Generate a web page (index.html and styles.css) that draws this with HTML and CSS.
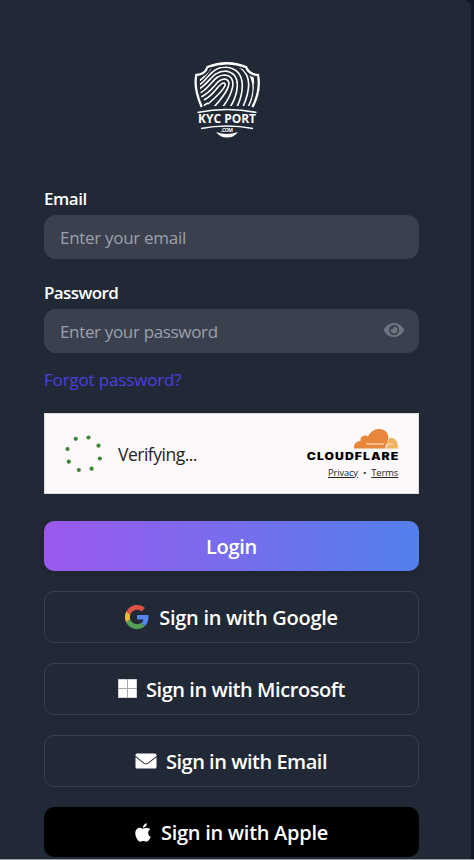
FILE: index.html
```html
<!DOCTYPE html>
<html lang="en">
<head>
<meta charset="utf-8">
<title>KYC Port – Login</title>
<link rel="stylesheet" href="styles.css">
</head>
<body>
<main class="card">
  <svg class="logo" viewBox="0 0 84 94" width="84" height="94" role="img" aria-label="KYC Port">
    <defs><clipPath id="shield"><path d="M15 25Q22 24 25.500 17Q42 11.500 58 17Q62 24 69 25Q70 41 65 54H19Q14 41 15 25Z"/></clipPath></defs>
    <g fill="none" stroke="#fff">
      <path stroke-width="2.300" d="M16.700 55Q8.500 36 11.300 23Q20 22.500 22.500 15Q42 7.500 61 15Q64 22.500 73 23Q76 38 67.500 55"/>
      <g stroke-width="1.600" clip-path="url(#shield)">
        <path d="M19 48C32 41 33 31 39 31C43 32 37 40 23 52"/>
        <path d="M16 45C30 38 31 27 40 27C49 29 41 42 29 55"/>
        <path d="M15 41C27 35 28 23 40 23C54 25 47 43 37 56"/>
        <path d="M14 37C25 31 27 19 41 19C59 22 52 45 44 57"/>
        <path d="M14 33C23 28 26 15 41 15C65 18 57 45 51 57"/>
        <path d="M14 29C21 25 24 18 28 13M50 13C70 21 64 42 57 57"/>
        <path d="M60 16C71 28 70 43 62 57M66 22C72 33 71 45 66 56"/>
        <path d="M18 54L23 51"/>
      </g>
      <path stroke-width="1.600" d="M12.500 60.500Q42 54.500 71.500 60.500M16 76.500Q42 71.500 68 76.500"/>
    </g>
    <text class="logo-name" x="42" y="71" textLength="58" lengthAdjust="spacingAndGlyphs">KYC PORT</text>
    <text class="logo-com" x="42" y="79.500" textLength="12">.COM</text>
    <path d="M31 80Q42 84 53 80Q49 85.500 42 85.500Q35 85.500 31 80Z" fill="#fff"/>
  </svg>

  <form class="form">
    <label class="label label-email" for="email">Email</label>
    <div class="field"><input id="email" class="input input-email" type="email" placeholder="Enter your email"></div>
    <label class="label label-password" for="password">Password</label>
    <div class="field">
      <input id="password" class="input input-password" type="password" placeholder="Enter your password">
      <svg class="eye" viewBox="0 0 22 16" width="22" height="16"><path fill="#717582" fill-rule="evenodd" d="M11 1C5.500 1 2.200 5 .7 8C2.200 11 5.500 15 11 15S19.800 11 21.300 8C19.800 5 16.500 1 11 1ZM11 2.800A5.200 5.200 0 1 1 11 13.200A5.200 5.200 0 0 1 11 2.800ZM11 4.500A3.500 3.500 0 1 1 7.600 7.300Q10.500 8 11 4.500Z"/></svg>
    </div>
    <a class="forgot">Forgot password?</a>

    <div class="turnstile">
      <svg class="spinner" viewBox="0 0 40 40" width="40" height="40" fill="#3f8238">
        <circle cx="13.700" cy="4.800" r="2.100"/><circle cx="26.500" cy="3.500" r="2.100"/><circle cx="36.500" cy="11.700" r="2.100"/><circle cx="37.800" cy="24.500" r="2.100"/><circle cx="29.600" cy="34.700" r="2.100"/><circle cx="16.800" cy="36" r="2.100"/><circle cx="6.800" cy="27.700" r="2.100"/><circle cx="5.500" cy="15" r="2.100"/>
      </svg>
      <span class="verifying">Verifying...</span>
      <div class="provider">
        <svg class="cf" viewBox="0 0 94 34" width="94" height="34">
          <path fill="#e8873b" d="M48 20.500C47.500 16 50.500 13 54.500 13C54 8.500 58.500 6 62 8.500C64.500 3 69.500 .5 74.500 1C80.500 2 83.500 7 82 12L79 20.500Z"/>
          <path fill="#efb35c" d="M79.500 20.500L82 17L80.500 15.500L83.500 10C88.500 9 92.500 13.500 91.800 20.500Z"/>
          <path d="M60 15.200H79L77.500 16.800H60ZM82 15L89 16L82 18Z" fill="#f7c9a0"/>
          <text class="cf-name" transform="translate(.8 31.500) scale(1.220 1)" x="0" y="0" textLength="75" lengthAdjust="spacing">CLOUDFLARE</text>
        </svg>
        <div class="legal"><u class="privacy">Privacy</u><span>•</span><u>Terms</u></div>
      </div>
    </div>

    <button class="btn btn-login" type="button"><span class="t-login">Login</span></button>
    <button class="btn btn-outline" type="button">
      <svg class="i-google" viewBox="0 0 48 48" width="24" height="24"><path fill="#dc5346" d="M24 9.500c3.500 0 6.700 1.200 9.200 3.600l6.900-6.900C35.900 2.400 30.500 0 24 0 14.600 0 6.500 5.400 2.600 13.200l8 6.200C12.400 13.700 17.700 9.500 24 9.500z"/><path fill="#5485ec" d="M47 24.600c0-1.600-.2-3.100-.4-4.600H24v9h12.900c-.6 3-2.200 5.500-4.700 7.200l7.700 6C44.400 38 47 31.800 47 24.600z"/><path fill="#e9b83c" d="M10.500 28.600a14.500 14.500 0 0 1 0-9.200l-8-6.200a24 24 0 0 0 0 21.600z"/><path fill="#559e55" d="M24 48c6.500 0 11.900-2.100 15.900-5.800l-7.700-6c-2.200 1.500-4.900 2.300-8.200 2.300-6.300 0-11.600-4.200-13.500-9.900l-8 6.200C6.500 42.600 14.600 48 24 48z"/></svg>
      <span class="t-google">Sign in with Google</span>
    </button>
    <button class="btn btn-outline" type="button">
      <svg class="i-ms" viewBox="0 0 19 19" width="19" height="19"><path fill="#fff" fill-opacity=".6" d="M0 0H19V19H0Z"/><path fill="#fff" d="M.5.500H9V9H.5ZM10 .5H18.500V9H10ZM.5 10H9V18.500H.5ZM10 10H18.500V18.500H10Z"/></svg>
      <span class="t-ms">Sign in with Microsoft</span>
    </button>
    <button class="btn btn-outline" type="button">
      <svg class="i-mail" viewBox="0 0 22 16" width="22" height="16"><path fill="#fff" d="M2 .5H20Q21.500.5 21.500 2V3L12.500 10Q11 11 9.500 10L.5 3V2Q.5.500 2 .5ZM.5 4.300L9 10.800Q11 12.200 13 10.800L21.500 4.300V14Q21.500 15.500 20 15.500H2Q.5 15.500.5 14Z"/></svg>
      <span class="t-mail">Sign in with Email</span>
    </button>
    <button class="btn btn-apple" type="button">
      <svg class="i-apple" viewBox="0 0 384 512" width="16" height="21"><path fill="#fff" d="M318.700 268.700c-.2-36.700 16.400-64.400 50-84.800-18.800-26.900-47.200-41.700-84.700-44.600-35.500-2.800-74.300 20.700-88.500 20.700-15 0-49.400-19.700-76.400-19.700C63.300 141.200 4 184.800 4 273.500q0 39.300 14.400 81.200c12.800 36.700 59 126.700 107.200 125.200 25.200-.6 43-17.900 75.800-17.900 31.800 0 48.300 17.900 76.400 17.900 48.600-.7 90.400-82.500 102.600-119.300-65.200-30.700-61.700-90-61.700-91.900zM262.100 104.500c27.300-32.400 24.800-61.900 24-72.500-24.100 1.400-52 16.400-67.900 34.900-17.500 19.800-27.800 44.300-25.600 71.900 26.100 2 49.900-11.400 69.500-34.300z"/></svg>
      <span class="t-apple">Sign in with Apple</span>
    </button>
  </form>
</main>
</body>
</html>
```
FILE: styles.css
```css
* { box-sizing: border-box; }
body {
  margin: 0;
  height: 860px;
  overflow: hidden;
  background: #111827;
  border-bottom: 1px solid #9aa1ad;
  font-family: "Open Sans", "Noto Sans", sans-serif;
  color: #fff;
}
.card {
  width: 471px;
  height: 859px;
  padding: 52px 52px 0 44px;
  background: #222936;
  border-top-right-radius: 8px;
}
.logo { display: block; margin-left: 141px; }
.logo-name { font: 700 12.5px "Open Sans", sans-serif; fill: #fff; text-anchor: middle; }
.logo-com { font: 700 5px "Open Sans", sans-serif; fill: #fff; text-anchor: middle; }
.form { display: flex; flex-direction: column; padding-top: 41px; }
.label { height: 24px; margin-bottom: 4px; font-size: 17px; font-weight: 600; line-height: 24px; }
.label-email { letter-spacing: -0.45px; }
.label-password { letter-spacing: -0.6px; }
.field {
  display: flex;
  align-items: center;
  height: 44px;
  margin-bottom: 22px;
  padding: 0 14px 0 16px;
  border-radius: 12px;
  background: #3b404f;
}
.input {
  flex: 1;
  min-width: 0;
  height: 44px;
  padding: 1px 0 0;
  border: 0;
  outline: 0;
  background: none;
  color: #fff;
  font: 400 17px/43px "Open Sans", sans-serif;
}
.input::placeholder { color: #9aa0ac; opacity: 1; }
.input-email { letter-spacing: -0.3px; }
.input-password { letter-spacing: -0.34px; }
.eye { flex: none; margin-top: -2px; }
.forgot { height: 26px; margin-top: -8px; color: #4a3fe0; font-size: 17px; line-height: 26px; letter-spacing: -0.16px; }
.turnstile {
  display: flex;
  align-items: center;
  height: 81px;
  margin: 20px 0 27px;
  padding: 0 18px 0 17px;
  border: 1px solid #dedbdd;
  background: #fdf9fa;
  color: #232323;
}
.spinner { margin-right: 16px; }
.verifying { padding-top: 1px; font-size: 17.5px; letter-spacing: -0.5px; }
.provider { display: flex; flex-direction: column; align-items: flex-end; margin-left: auto; }
.cf-name { font: 900 10px Inter, sans-serif; fill: #000; }
.legal { display: flex; gap: 5px; margin: 4px 2px 0 0; font-size: 9.3px; line-height: 14px; letter-spacing: -0.1px; text-underline-offset: 1px; }
.btn {
  display: flex;
  align-items: center;
  justify-content: center;
  width: 375px;
  height: 52px;
  margin: 0 0 20px;
  padding: 0;
  border: 1px solid #3a404d;
  border-radius: 10px;
  background: none;
  color: #fff;
  font: 600 20px/28px "Open Sans", sans-serif;
}
.btn svg { flex: none; margin-right: 10px; }
.btn .i-ms, .btn .i-mail { margin-right: 9px; margin-bottom: 1px; }
.btn .i-mail { margin-left: -1px; }
.btn span { padding-top: 2px; white-space: nowrap; letter-spacing: -0.28px; }
.btn .t-ms { letter-spacing: -0.43px; }
.btn .t-mail { letter-spacing: -0.48px; }
.btn-login { height: 50px; border: 0; background: linear-gradient(90deg, #9b59ed, #5380ed); box-shadow: 0 3px 6px #1e2430; }
.btn-apple { height: 50px; border: 0; background: #000; }
```
